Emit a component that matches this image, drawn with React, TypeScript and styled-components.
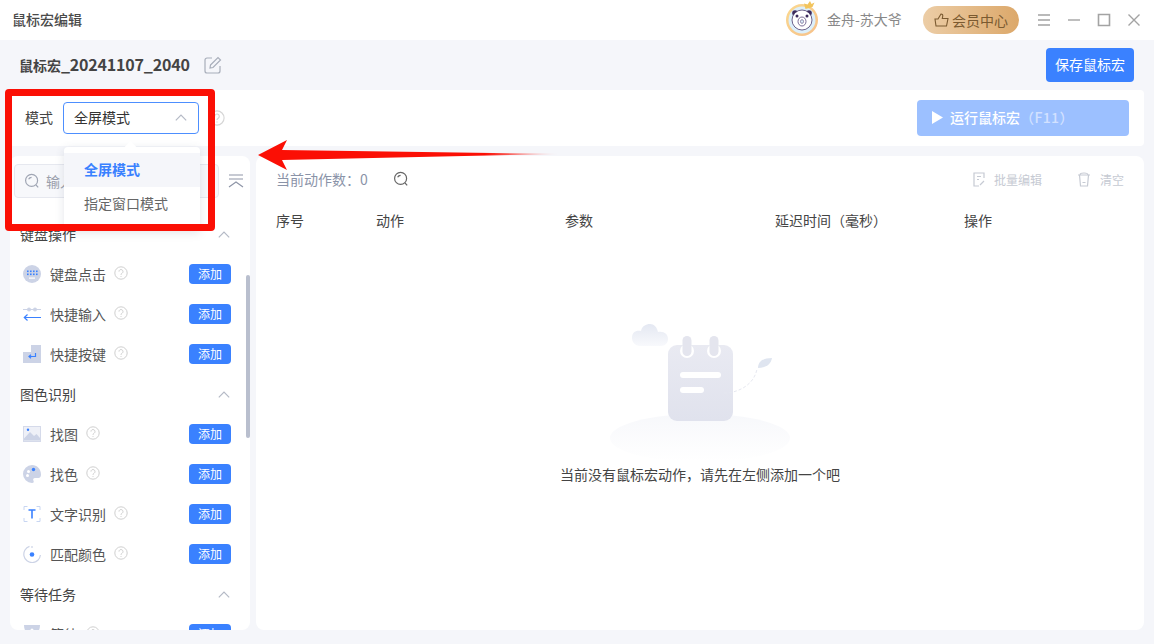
import React from "react";
import styled, { createGlobalStyle } from "styled-components";

const GlobalStyle = createGlobalStyle`
  html, body { margin: 0; padding: 0; background: #f5f6fa; }
  * { box-sizing: border-box; }
  body { font-family: "Noto Sans CJK SC", "Noto Sans", sans-serif; }
`;

const Page = styled.div`
  position: relative;
  width: 1154px;
  height: 644px;
  overflow: hidden;
  display: flex;
  flex-direction: column;
  background: #f5f6fa;
  color: #333;
  font-size: 14px;
`;

const TitleBar = styled.div`
  height: 40px;
  flex: none;
  background: #fff;
  display: flex;
  align-items: center;
  padding: 0 13px 0 12px;
`;
const AppName = styled.div`
  font-size: 14px;
  font-weight: 500;
  color: #4a4a4a;
  line-height: 20px;
  padding-bottom: 2px;
  flex: 1;
`;
const AvatarSvg = styled.svg`
  flex: none;
  display: block;
`;
const UserName = styled.span`
  margin-left: 7px;
  padding-bottom: 2px;
  color: #888;
  font-size: 14px;
  width: 76px;
  white-space: nowrap;
`;
const VipPill = styled.div`
  margin-left: 20px;
  width: 96px;
  height: 28px;
  border-radius: 14px;
  background: linear-gradient(90deg, #eccda6, #dca86a);
  color: #7b5a30;
  display: flex;
  align-items: center;
  justify-content: center;
  gap: 3px;
  font-size: 14px;
  padding-bottom: 1px;
`;
const WinButtons = styled.div`
  margin-left: 18px;
  display: flex;
  gap: 16px;
  color: #a3a3a3;
  svg { display: block; }
`;

const HeadRow = styled.div`
  height: 50px;
  flex: none;
  display: flex;
  align-items: center;
  padding: 0 20px 0 19px;
`;
const MacroName = styled.div`
  font-size: 16px;
  font-weight: 700;
  color: #444;
  flex: none;
  width: 170px;
  white-space: nowrap;
  letter-spacing: -0.2px;
  padding-bottom: 2px;
`;
const MacroPrefix = styled.span`
  font-size: 14px;
  letter-spacing: 0;
`;
const EditBtn = styled.span`
  margin-left: 15px;
  color: #a8aeba;
  flex: 1;
  display: flex;
`;
const SaveBtn = styled.div`
  width: 88px;
  height: 34px;
  background: #3a81ff;
  color: #fff;
  border-radius: 4px;
  display: flex;
  align-items: center;
  justify-content: center;
  font-size: 14px;
  padding-bottom: 2px;
`;

const ModeBar = styled.div`
  margin: 0 10px;
  height: 56px;
  flex: none;
  background: #fff;
  border-radius: 4px;
  display: flex;
  align-items: center;
  padding: 0 15px;
`;
const ModeLabel = styled.span`
  color: #444;
  width: 38px;
  flex: none;
  padding-bottom: 2px;
`;
const SelectBox = styled.div`
  width: 136px;
  height: 32px;
  border: 1px solid #4d8fff;
  border-radius: 4px;
  display: flex;
  align-items: center;
  justify-content: space-between;
  padding: 0 11px 2px 10px;
  color: #333;
`;
const ModeHelp = styled.span`
  display: flex;
  margin-left: 10px;
`;
const RunBtn = styled.div`
  margin-left: auto;
  width: 212px;
  height: 36px;
  background: #9cc0ff;
  color: #fff;
  border-radius: 4px;
  display: flex;
  align-items: center;
  font-weight: 500;
  padding: 0 0 2px 15px;
`;
const RunLabel = styled.span`
  margin-left: 7px;
`;
const Muted = styled.span`
  color: #d2e1ff;
  letter-spacing: 0.4px;
`;

const Content = styled.div`
  flex: 1;
  min-height: 0;
  display: flex;
  gap: 6px;
  padding: 10px 10px 14px;
`;
const Sidebar = styled.aside`
  position: relative;
  width: 240px;
  flex: none;
  background: #fff;
  border-radius: 8px;
  overflow: hidden;
  padding: 8px 19px 0 10px;
`;
const Thumb = styled.div`
  position: absolute;
  right: 0;
  top: 119px;
  width: 4px;
  height: 163px;
  border-radius: 2px;
  background: #b9bfce;
`;
const SearchRow = styled.div`
  display: flex;
  align-items: center;
  margin-left: -6px;
  width: 231px;
`;
const SearchBox = styled.div`
  width: 205px;
  height: 34px;
  border: 1px solid #e6e8ef;
  border-radius: 4px;
  background: #f7f8fb;
  display: flex;
  align-items: center;
  gap: 6px;
  padding: 0 9px 1px;
  color: #9a9fab;
`;
const Collapse = styled.span`
  margin-left: 9px;
  display: flex;
  color: #8f96a8;
`;
const List = styled.div`
  margin-top: 16px;
`;
const GroupHead = styled.div`
  height: 40px;
  display: flex;
  align-items: center;
  justify-content: space-between;
  color: #444;
  padding-right: 1px;
`;
const Row = styled.div`
  height: 40px;
  display: flex;
  align-items: center;
  padding-left: 3px;
`;
const RowIcon = styled.span`
  width: 18px;
  height: 18px;
  flex: none;
  margin-right: 9px;
  svg { display: block; }
`;
const RowLabel = styled.span`
  color: #555;
  white-space: nowrap;
`;
const Help = styled.span`
  display: flex;
  margin-left: 8px;
  margin-top: -3px;
`;
const AddBtn = styled.span`
  margin-left: auto;
  width: 42px;
  height: 20px;
  border-radius: 4px;
  background: #3a81ff;
  color: #fff;
  font-size: 12px;
  line-height: 20px;
  text-align: center;
`;

const Main = styled.main`
  flex: 1;
  min-width: 0;
  background: #fff;
  border-radius: 8px;
  display: flex;
  flex-direction: column;
  align-items: stretch;
`;
const Toolbar = styled.div`
  height: 48px;
  flex: none;
  display: flex;
  align-items: center;
  padding: 0 20px 2px;
  color: #8a93a8;
`;
const SearchIconWrap = styled.span`
  display: flex;
  margin-left: 25px;
  color: #666;
`;
const ToolAction = styled.span<{ $first?: boolean }>`
  display: flex;
  align-items: center;
  gap: 9px;
  font-size: 12px;
  color: #c6cad3;
  margin-left: ${(p) => (p.$first ? "auto" : "35px")};
`;
const TableHead = styled.div`
  height: 34px;
  flex: none;
  display: grid;
  grid-template-columns: 100px 189px 210px 189px 1fr;
  align-items: center;
  padding: 0 0 2px 20px;
  color: #444;
`;
const Empty = styled.div`
  margin-top: 72px;
  display: flex;
  flex-direction: column;
  align-items: center;
  color: #444;
`;
const EmptyText = styled.div`
  margin-top: 3px;
  line-height: 22px;
`;

const RedFrame = styled.div`
  position: absolute;
  left: 5px;
  top: 89px;
  width: 210px;
  height: 142px;
  border: 7px solid #fb0f05;
  border-radius: 4px;
  z-index: 3;
  pointer-events: none;
`;
const Arrow = styled.svg`
  position: absolute;
  left: 250px;
  top: 135px;
  z-index: 3;
`;
const Dropdown = styled.div`
  position: absolute;
  left: 64px;
  top: 147px;
  width: 136px;
  height: 84px;
  background: #fff;
  border-radius: 4px 4px 0 0;
  box-shadow: 0 2px 10px rgba(60, 70, 100, 0.14);
  padding-top: 6px;
  z-index: 2;
  &::before {
    content: "";
    position: absolute;
    top: -4px;
    left: 62px;
    width: 9px;
    height: 9px;
    background: #fff;
    transform: rotate(45deg);
  }
`;
const DropItem = styled.div<{ $active?: boolean }>`
  position: relative;
  height: 34px;
  display: flex;
  align-items: center;
  padding: 0 0 2px 20px;
  background: ${(p) => (p.$active ? "#f5f6fa" : "#fff")};
  color: ${(p) => (p.$active ? "#3a81ff" : "#666")};
  font-weight: ${(p) => (p.$active ? 700 : 400)};
`;

const HelpGlyph = ({ size = 14, color = "#cfcfcf" }: { size?: number; color?: string }) => (
  <svg width={size} height={size} viewBox="0 0 14 14" fill="none" stroke={color} strokeWidth="1">
    <circle cx="7" cy="7" r="6.2" />
    <path d="M5 5.6a2 2 0 1 1 3.1 1.6c-.7.5-1.1.8-1.1 1.600M7 10v.9" />
  </svg>
);

const Chevron = ({ color = "#b5bac6" }: { color?: string }) => (
  <svg width="12" height="7" viewBox="0 0 12 7" fill="none" stroke={color} strokeWidth="1.2">
    <path d="M.8 6.3 6 1l5.2 5.3" />
  </svg>
);

const SearchGlyph = ({ color }: { color: string }) => (
  <svg width="16" height="16" viewBox="0 0 16 16" fill="none" stroke={color} strokeWidth="1.2">
    <circle cx="7.6" cy="7.4" r="6" />
    <path d="M4.6 6.2A3.4 3.4 0 0 1 7.6 4.3M12 12l2.2 2.4" />
  </svg>
);

const KeyboardIcon = () => (
  <svg viewBox="0 0 18 18" width="18" height="18">
    <circle cx="9" cy="9" r="9" fill="#ccd3e6" />
    <g fill="#3a81ff">
      <rect x="4" y="5.500" width="1.600" height="1.600" />
      <rect x="7" y="5.500" width="1.600" height="1.600" />
      <rect x="10" y="5.500" width="1.600" height="1.600" />
      <rect x="13" y="5.500" width="1.600" height="1.600" />
      <rect x="4" y="8.500" width="1.600" height="1.600" />
      <rect x="7" y="8.500" width="1.600" height="1.600" />
      <rect x="10" y="8.500" width="1.600" height="1.600" />
      <rect x="13" y="8.500" width="1.600" height="1.600" />
    </g>
    <rect x="6" y="12.500" width="6" height="1.200" fill="#fff" />
  </svg>
);
const InputIcon = () => (
  <svg viewBox="0 0 18 18" width="18" height="18" fill="none">
    <path d="M0 4.500h18" stroke="#ccd3e6" />
    <circle cx="6" cy="4.500" r="2" fill="#ccd3e6" />
    <circle cx="12" cy="4.500" r="2" fill="#ccd3e6" />
    <path d="M18 12.500H1M4.500 9.500l-3.200 3 3.200 3" stroke="#3a81ff" strokeWidth="1.200" />
  </svg>
);
const EnterIcon = () => (
  <svg viewBox="0 0 18 18" width="18" height="18">
    <path d="M8 0h10v18H0V7h8z" fill="#ccd3e6" />
    <path d="M12.500 8v3.500H6M8 9.800 6 11.500 8 13.200" fill="none" stroke="#3a81ff" strokeWidth="1.200" />
  </svg>
);
const ImageIcon = () => (
  <svg viewBox="0 0 18 18" width="18" height="18">
    <rect x="0.500" y="1.500" width="17" height="15" fill="#eef0f7" stroke="#d5daea" />
    <path d="M1 15.500 1 13.500 7 7l4 4 2.500-2 3.500 4v2.500z" fill="#ccd3e6" />
    <circle cx="5" cy="4.800" r="1.200" fill="#3a81ff" />
  </svg>
);
const PaletteIcon = () => (
  <svg viewBox="0 0 18 18" width="18" height="18">
    <path d="M9 0a9 9 0 1 0 0 18c2 0 2-1.600 1.400-2.600-.7-1.300.2-2.400 1.600-2.400h3.400c1.700 0 2.600-1.300 2.600-3.500C18 4 14 0 9 0z" fill="#ccd3e6" />
    <circle cx="10.500" cy="4.500" r="1.700" fill="#3a81ff" />
    <circle cx="5.500" cy="6.500" r="1.500" fill="#fff" />
    <circle cx="4.500" cy="10.500" r="1.500" fill="#fff" />
  </svg>
);
const TextIcon = () => (
  <svg viewBox="0 0 18 18" width="18" height="18" fill="none">
    <path d="M1 5V1.500h3.500M13.500 1.500H17V5M1 13v3.500h3.500M13.500 16.500H17V13" stroke="#c8d6f2" />
    <path d="M5.500 5h7M9 5v8.500" stroke="#3a81ff" strokeWidth="1.600" />
  </svg>
);
const MatchIcon = () => (
  <svg viewBox="0 0 18 18" width="18" height="18" fill="none">
    <path d="M6.500 1.400A8.300 8.300 0 1 0 17.400 10" stroke="#ccd3e6" strokeWidth="1.200" />
    <path d="M9 1v2" stroke="#ccd3e6" strokeWidth="1.200" />
    <circle cx="9" cy="9.500" r="2.300" fill="#3a81ff" />
  </svg>
);
const WaitIcon = () => (
  <svg viewBox="0 0 18 18" width="18" height="18">
    <path d="M1 0h16c0 5-2 8-5.500 9.500C15 11 17 14 17 18H1c0-4 2-7 5.500-8.500C3 8 1 5 1 0z" fill="#ccd3e6" />
    <circle cx="9" cy="5" r="1.500" fill="#fff" />
  </svg>
);

const Avatar = () => (
  <AvatarSvg width="36" height="40" viewBox="0 0 36 40">
    <defs>
      <linearGradient id="ring" x1="0" y1="0" x2="1" y2="1">
        <stop offset="0" stopColor="#fbd98f" />
        <stop offset="1" stopColor="#f6c08a" />
      </linearGradient>
    </defs>
    <circle cx="18" cy="20" r="16" fill="url(#ring)" />
    <circle cx="18" cy="20" r="13.500" fill="#dceffa" />
    <circle cx="11" cy="13" r="2.800" fill="#3b2a5c" />
    <circle cx="25" cy="13" r="2.800" fill="#3b2a5c" />
    <circle cx="18" cy="20" r="10" fill="#fff" stroke="#4a3a6c" strokeWidth=".8" />
    <circle cx="13" cy="16" r="1.500" fill="#3b2a5c" />
    <circle cx="23" cy="16" r="1.500" fill="#3b2a5c" />
    <ellipse cx="18" cy="21.500" rx="4" ry="4.500" fill="#fff" stroke="#5a4a7c" strokeWidth=".8" />
    <ellipse cx="18" cy="21.500" rx="1.500" ry="1.900" fill="#dceffa" stroke="#5a4a7c" strokeWidth=".6" />
    <path d="M20 3.500 21.500 9l7 -2 2-4.500-3 1.500L26 1l-2.500 3.500z" fill="#f2c45c" />
  </AvatarSvg>
);

const Illustration = () => (
  <svg width="220" height="150" viewBox="0 0 220 150">
    <defs>
      <linearGradient id="cloud" x1="0" y1="0" x2="0" y2="1">
        <stop offset="0" stopColor="#e4e8f2" />
        <stop offset="1" stopColor="#f8f9fc" />
      </linearGradient>
      <linearGradient id="hill" x1="0" y1="0" x2="0" y2="1">
        <stop offset="0" stopColor="#f7f8fb" />
        <stop offset="1" stopColor="#ffffff" />
      </linearGradient>
      <linearGradient id="pad" x1="0" y1="0" x2="0" y2="1">
        <stop offset="0" stopColor="#e9eaf2" />
        <stop offset="1" stopColor="#e0e2ed" />
      </linearGradient>
    </defs>
    <ellipse cx="110" cy="128" rx="90" ry="24" fill="url(#hill)" />
    <path d="M42 28c0-6 4-8 9-7 1-5 5-7 9-7s7 3 8 8c6-1 10 2 10 7 0 4-3 7-7 7H50c-5 0-8-4-8-8z" fill="url(#cloud)" />
    <rect x="78" y="35" width="65" height="76" rx="9" fill="url(#pad)" />
    <circle cx="97" cy="41" r="7" fill="#fff" />
    <circle cx="124" cy="41" r="7" fill="#fff" />
    <rect x="92.500" y="26" width="9" height="20" rx="4.500" fill="#e4e5ee" />
    <rect x="119.500" y="26" width="9" height="20" rx="4.500" fill="#e4e5ee" />
    <rect x="90" y="62" width="41" height="6" rx="3" fill="#fff" />
    <rect x="90" y="77" width="24" height="6" rx="3" fill="#fff" />
    <path d="M134 83c14 0 30-8 33-24" fill="none" stroke="#e6e8f0" strokeDasharray="3 2" />
    <path d="M168 58c0-7 6-10 14-10-1 6-6 10-14 10z" fill="#dfe5f0" />
  </svg>
);

const groups = [
  {
    name: "键盘操作",
    items: [
      { label: "键盘点击", icon: <KeyboardIcon /> },
      { label: "快捷输入", icon: <InputIcon /> },
      { label: "快捷按键", icon: <EnterIcon /> },
    ],
  },
  {
    name: "图色识别",
    items: [
      { label: "找图", icon: <ImageIcon /> },
      { label: "找色", icon: <PaletteIcon /> },
      { label: "文字识别", icon: <TextIcon /> },
      { label: "匹配颜色", icon: <MatchIcon /> },
    ],
  },
  {
    name: "等待任务",
    items: [{ label: "等待", icon: <WaitIcon /> }],
  },
];

const columns = ["序号", "动作", "参数", "延迟时间（毫秒）", "操作"];

export default function App() {
  return (
    <Page>
      <GlobalStyle />
      <TitleBar>
        <AppName>鼠标宏编辑</AppName>
        <Avatar />
        <UserName>金舟-苏大爷</UserName>
        <VipPill>
          <svg width="15" height="14" viewBox="0 0 15 14" fill="none" stroke="#7b5a30" strokeWidth="1.100">
            <path d="M1 6h3l3-5c1.500 0 2 1 1.700 2.300L8.300 5.500H14l-1.500 7.500H2z" />
          </svg>
          会员中心
        </VipPill>
        <WinButtons>
          <svg width="14" height="14" viewBox="0 0 14 14" stroke="currentColor" strokeWidth="1.400"><path d="M1 2h12M1 7h12M1 12h12" /></svg>
          <svg width="14" height="14" viewBox="0 0 14 14" stroke="currentColor" strokeWidth="1.400"><path d="M1 7h12" /></svg>
          <svg width="14" height="14" viewBox="0 0 14 14" fill="none" stroke="currentColor" strokeWidth="1.600"><path d="M1.500 1.500h11v11h-11z" /></svg>
          <svg width="14" height="14" viewBox="0 0 14 14" stroke="currentColor" strokeWidth="1.400"><path d="m1.500 1.500 11 11M12.500 1.500l-11 11" /></svg>
        </WinButtons>
      </TitleBar>

      <HeadRow>
        <MacroName>
          <MacroPrefix>鼠标宏</MacroPrefix>_20241107_2040
        </MacroName>
        <EditBtn>
          <svg width="18" height="18" viewBox="0 0 18 18" fill="none" stroke="currentColor" strokeWidth="1.200">
            <path d="M8 2H3a2 2 0 0 0-2 2v11a2 2 0 0 0 2 2h11a2 2 0 0 0 2-2v-5" />
            <path d="m6.500 9 7.500-7.500 2.500 2.500L9 11.500l-3 .500z" />
          </svg>
        </EditBtn>
        <SaveBtn>保存鼠标宏</SaveBtn>
      </HeadRow>

      <ModeBar>
        <ModeLabel>模式</ModeLabel>
        <SelectBox>
          全屏模式
          <Chevron />
        </SelectBox>
        <ModeHelp>
          <HelpGlyph size={16} color="#d6d6d6" />
        </ModeHelp>
        <RunBtn>
          <svg width="11" height="13" viewBox="0 0 11 13" fill="#fff"><path d="M0 0v13l11-6.500z" /></svg>
          <RunLabel>运行鼠标宏</RunLabel>
          <Muted>（F11）</Muted>
        </RunBtn>
      </ModeBar>

      <Content>
        <Sidebar>
          <Thumb />
          <SearchRow>
            <SearchBox>
              <SearchGlyph color="#a0a6b4" />
              输入关键字搜索
            </SearchBox>
            <Collapse>
              <svg width="16" height="14" viewBox="0 0 16 14" fill="none" stroke="currentColor" strokeWidth="1.200">
                <path d="M1 1h14M1 5h14M1 13l7-5 7 5" />
              </svg>
            </Collapse>
          </SearchRow>
          <List>
            {groups.map((g) => (
              <div key={g.name}>
                <GroupHead>
                  {g.name}
                  <Chevron />
                </GroupHead>
                {g.items.map((it) => (
                  <Row key={it.label}>
                    <RowIcon>{it.icon}</RowIcon>
                    <RowLabel>{it.label}</RowLabel>
                    <Help>
                      <HelpGlyph />
                    </Help>
                    <AddBtn>添加</AddBtn>
                  </Row>
                ))}
              </div>
            ))}
          </List>
        </Sidebar>

        <Main>
          <Toolbar>
            当前动作数：0
            <SearchIconWrap>
              <SearchGlyph color="#666" />
            </SearchIconWrap>
            <ToolAction $first>
              <svg width="12" height="15" viewBox="0 0 12 15" fill="none" stroke="currentColor" strokeWidth="1.200">
                <path d="M11 6V1H1v13h5M4 4.500h4M4 7.500h2M7 13l4-4" />
              </svg>
              批量编辑
            </ToolAction>
            <ToolAction>
              <svg width="14" height="15" viewBox="0 0 14 15" fill="none" stroke="currentColor" strokeWidth="1.200">
                <path d="M1 3h12M3 3c0-1.500 1-2 4-2s4 .5 4 2M2.500 3l1 11h7l1-11M5.500 10.500h3" />
              </svg>
              清空
            </ToolAction>
          </Toolbar>
          <TableHead>
            {columns.map((c) => (
              <span key={c}>{c}</span>
            ))}
          </TableHead>
          <Empty>
            <Illustration />
            <EmptyText>当前没有鼠标宏动作，请先在左侧添加一个吧</EmptyText>
          </Empty>
        </Main>
      </Content>

      <Dropdown>
        <DropItem $active>全屏模式</DropItem>
        <DropItem>指定窗口模式</DropItem>
      </Dropdown>
      <RedFrame />
      <Arrow width="312" height="40" viewBox="0 0 312 40">
        <defs>
          <linearGradient id="shaft" x1="0" y1="0" x2="1" y2="0">
            <stop offset="0" stopColor="#fb0f05" />
            <stop offset="0.75" stopColor="#fb0f05" />
            <stop offset="1" stopColor="#fb0f05" stopOpacity="0" />
          </linearGradient>
        </defs>
        <path d="M8 20 37 5l-5 10 278 4-278 6 5 10z" fill="url(#shaft)" />
      </Arrow>
    </Page>
  );
}
